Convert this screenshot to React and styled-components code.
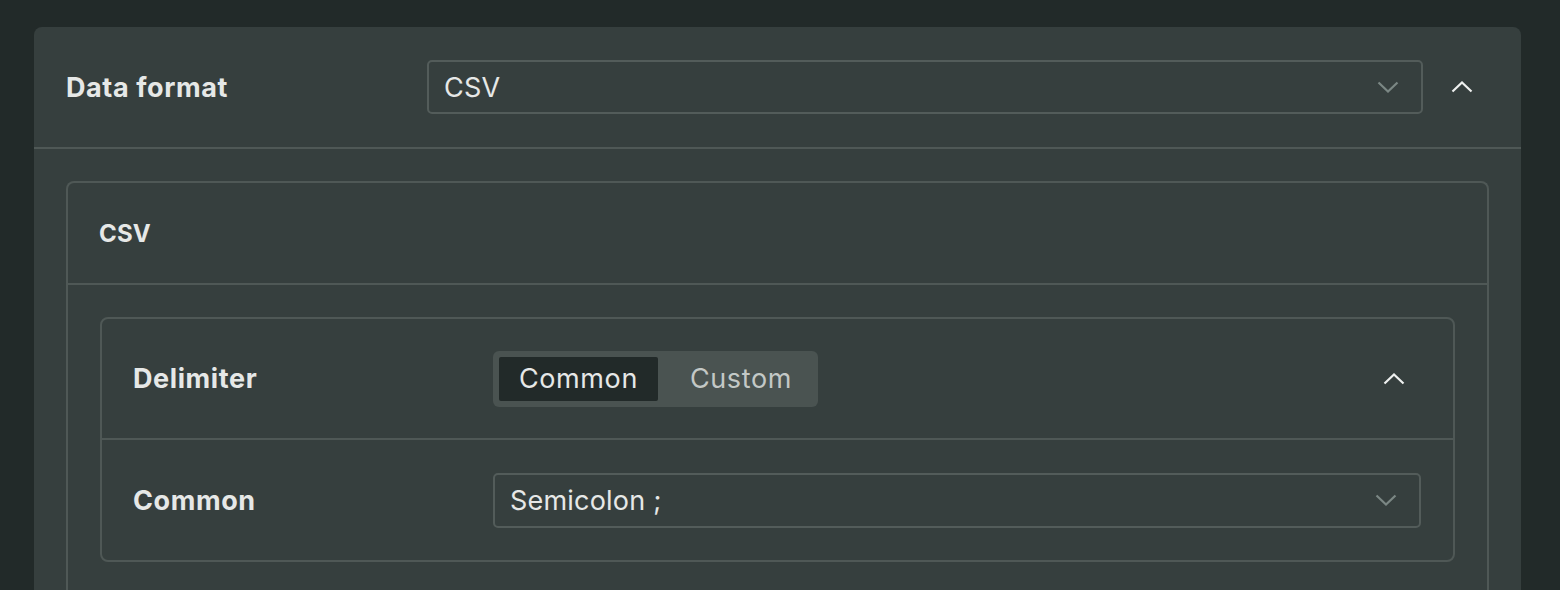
import React, { useState } from "react";
import styled, { createGlobalStyle } from "styled-components";

const GlobalStyle = createGlobalStyle`
  html, body {
    margin: 0;
    background: #222a29;
    font-family: Inter, "Noto Sans", sans-serif;
    color: #e6e8e7;
  }
`;

const Page = styled.div`
  padding: 27px 39px 0 34px;
  height: 590px;
  box-sizing: border-box;
  overflow: hidden;
`;

const Card = styled.div`
  background: #363f3e;
  border-radius: 8px 8px 0 0;
`;

const Panel = styled.div`
  border: 2px solid #4f5856;
  border-radius: 8px;
  ${p => p.$open && `border-bottom-left-radius: 0; border-bottom-right-radius: 0; border-bottom: none;`}
`;

const Row = styled.div`
  display: flex;
  align-items: center;
  height: ${p => p.$height}px;
  padding: 0 32px 0 ${p => p.$left}px;
  border-bottom: ${p => (p.$divider ? "2px solid #4f5856" : "none")};
`;

const Label = styled.div`
  flex: 0 0 ${p => p.$width}px;
  font-weight: 700;
  font-size: ${p => p.$size}px;
  letter-spacing: ${p => (p.$size > 25 ? "0.6px" : "0.2px")};
`;

const Body = styled.div`
  padding: 32px;
`;

const Select = styled.div`
  flex: 1;
  display: flex;
  align-items: center;
  justify-content: space-between;
  height: ${p => p.$height}px;
  box-sizing: border-box;
  border: 2px solid #535c5a;
  border-radius: 5px;
  padding: 0 22px 0 15px;
  font-size: 27px;
  letter-spacing: 0.2px;
  color: #e6e8e7;
`;

const Spacer = styled.div`
  flex: 1;
`;

const CollapseButton = styled.button`
  flex: 0 0 54px;
  height: 40px;
  margin-left: 12px;
  border: none;
  background: none;
  padding: 0;
  display: flex;
  align-items: center;
  justify-content: center;
  cursor: pointer;
`;

const Toggle = styled.div`
  display: flex;
  gap: 12px;
  padding: 6px;
  background: #4a5351;
  border-radius: 6px;
`;

const Segment = styled.button`
  height: 44px;
  padding: 0 20px;
  border: none;
  border-radius: 2px;
  font-family: inherit;
  font-size: 27px;
  letter-spacing: 0.6px;
  background: ${p => (p.$active ? "#222a29" : "transparent")};
  color: ${p => (p.$active ? "#e6e8e7" : "#c3c8c6")};
  cursor: pointer;
`;

const ChevronDown = () => (
  <svg width="22" height="12" viewBox="0 0 22 12" fill="none">
    <path d="M1.5 1.5 L11 10.5 L20.5 1.5" stroke="#7b8784" strokeWidth="2.2" />
  </svg>
);

const ChevronUp = () => (
  <svg width="22" height="12" viewBox="0 0 22 12" fill="none">
    <path d="M1.5 10.5 L11 1.5 L20.5 10.5" stroke="#eef0ef" strokeWidth="2.2" />
  </svg>
);

export default function App() {
  const [mode, setMode] = useState("Common");

  return (
    <Page>
      <GlobalStyle />
      <Card>
        <Row $height={120} $left={32} $divider>
          <Label $width={361} $size={27}>Data format</Label>
          <Select $height={54}>
            CSV
            <ChevronDown />
          </Select>
          <CollapseButton>
            <ChevronUp />
          </CollapseButton>
        </Row>
        <Body>
          <Panel $open>
            <Row $height={100} $left={31} $divider>
              <Label $width={360} $size={24}>CSV</Label>
            </Row>
            <Body>
              <Panel>
                <Row $height={119} $left={31} $divider>
                  <Label $width={360} $size={27}>Delimiter</Label>
                  <Toggle>
                    {["Common", "Custom"].map(m => (
                      <Segment key={m} $active={mode === m} onClick={() => setMode(m)}>
                        {m}
                      </Segment>
                    ))}
                  </Toggle>
                  <Spacer />
                  <CollapseButton>
                    <ChevronUp />
                  </CollapseButton>
                </Row>
                <Row $height={120} $left={31}>
                  <Label $width={360} $size={27}>Common</Label>
                  <Select $height={55}>
                    Semicolon ;
                    <ChevronDown />
                  </Select>
                </Row>
              </Panel>
            </Body>
          </Panel>
        </Body>
      </Card>
    </Page>
  );
}
